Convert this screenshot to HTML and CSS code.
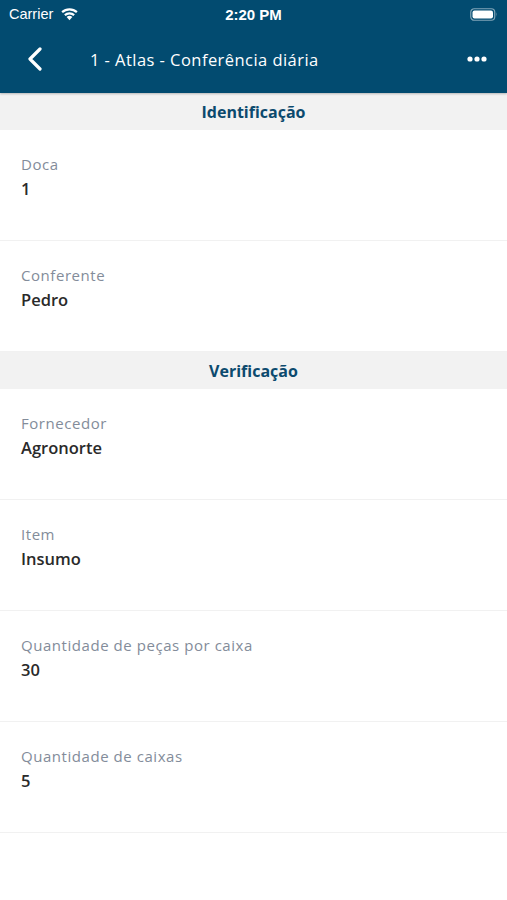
FILE: index.html
```html
<!DOCTYPE html>
<html lang="pt">
<head>
<meta charset="utf-8">
<link rel="stylesheet" href="styles.css">
</head>
<body>
<div class="app">
  <header class="topbar">
    <div class="status">
      <div class="status-left">
        <span class="carrier">Carrier</span>
        <svg class="wifi" width="19" height="14" viewBox="0 0 18 13">
          <path d="M9 12.5 L6.3 9.4 A4 4 0 0 1 11.7 9.4 Z" fill="#fff"/>
          <path d="M3.9 6.8 A7.5 7.5 0 0 1 14.1 6.8 L12.7 8.4 A5.4 5.4 0 0 0 5.3 8.4 Z" fill="#fff"/>
          <path d="M1.3 4 A11.3 11.3 0 0 1 16.7 4 L15.3 5.6 A9.2 9.2 0 0 0 2.7 5.6 Z" fill="#fff"/>
        </svg>
      </div>
      <span class="time">2:20 PM</span>
      <div class="status-right">
        <svg class="battery" width="28" height="13" viewBox="0 0 28 13">
          <rect x="0.75" y="0.75" width="24" height="11.5" rx="3.5" fill="none" stroke="rgba(255,255,255,0.5)" stroke-width="1.2"/>
          <rect x="2.5" y="2.5" width="20.5" height="8" rx="2" fill="#fff"/>
          <path d="M26.3 4.3 Q27.6 6.5 26.3 8.7 Z" fill="rgba(255,255,255,0.5)"/>
        </svg>
      </div>
    </div>
    <nav class="navbar">
      <svg class="back" width="16" height="24" viewBox="0 0 16 24">
        <path d="M13 2 L3 12 L13 22" fill="none" stroke="#fff" stroke-width="3.2" stroke-linecap="round" stroke-linejoin="round"/>
      </svg>
      <h1 class="title">1 - Atlas - Conferência diária</h1>
      <svg class="more" width="20" height="6" viewBox="0 0 20 6">
        <circle cx="3" cy="3" r="2.6" fill="#fff"/>
        <circle cx="10" cy="3" r="2.6" fill="#fff"/>
        <circle cx="17" cy="3" r="2.6" fill="#fff"/>
      </svg>
    </nav>
  </header>

  <main class="content">
    <div class="section-head">Identificação</div>
    <div class="field">
      <div class="label">Doca</div>
      <div class="value">1</div>
    </div>
    <div class="field">
      <div class="label">Conferente</div>
      <div class="value">Pedro</div>
    </div>
    <div class="section-head">Verificação</div>
    <div class="field">
      <div class="label">Fornecedor</div>
      <div class="value">Agronorte</div>
    </div>
    <div class="field">
      <div class="label">Item</div>
      <div class="value">Insumo</div>
    </div>
    <div class="field">
      <div class="label">Quantidade de peças por caixa</div>
      <div class="value">30</div>
    </div>
    <div class="field">
      <div class="label">Quantidade de caixas</div>
      <div class="value">5</div>
    </div>
  </main>
</div>
</body>
</html>
```

FILE: styles.css
```css
* { box-sizing: border-box; margin: 0; padding: 0; }
html, body { background: #fff; }
body {
  font-family: "Open Sans", "Noto Sans", "Liberation Sans", sans-serif;
  width: 507px;
  height: 900px;
  overflow: hidden;
}
.app { display: flex; flex-direction: column; }

.topbar {
  background: #024b70;
  color: #fff;
  box-shadow: 0 1px 2px rgba(0,0,0,0.25);
  position: relative;
  z-index: 1;
}
.status {
  height: 28px;
  display: grid;
  grid-template-columns: 1fr auto 1fr;
  align-items: center;
  padding: 0 9px 0 9px;
}
.status-left { display: flex; align-items: center; gap: 7px; }
.carrier { font-family: "Liberation Sans", "Roboto", sans-serif; font-size: 14.5px; }
.wifi { margin-top: -1px; }
.time {
  font-family: "Liberation Sans", "Roboto", sans-serif;
  font-weight: 700;
  font-size: 15px;
}
.status-right { display: flex; justify-content: flex-end; }

.navbar {
  height: 65px;
  display: flex;
  align-items: center;
  padding: 0 20px 3px 27px;
}
.back { flex: none; }
.title {
  flex: 1;
  font-weight: 400;
  font-size: 16.5px;
  margin-left: 47px;
  letter-spacing: 0.45px;
}
.more { flex: none; }

.content { display: flex; flex-direction: column; }
.section-head {
  height: 37px;
  background: #f2f2f2;
  color: #0c4a6e;
  font-weight: 700;
  font-size: 16px;
  display: flex;
  align-items: center;
  justify-content: center;
}
.field {
  height: 111px;
  padding: 24px 21px 0;
  border-bottom: 1px solid #f1f1f1;
}
.label {
  color: #838c9a;
  font-size: 15px;
  line-height: 20px;
  letter-spacing: 0.55px;
}
.value {
  color: #2a2a2a;
  font-weight: 600;
  font-size: 16.5px;
  line-height: 24px;
  margin-top: 3px;
}
```
